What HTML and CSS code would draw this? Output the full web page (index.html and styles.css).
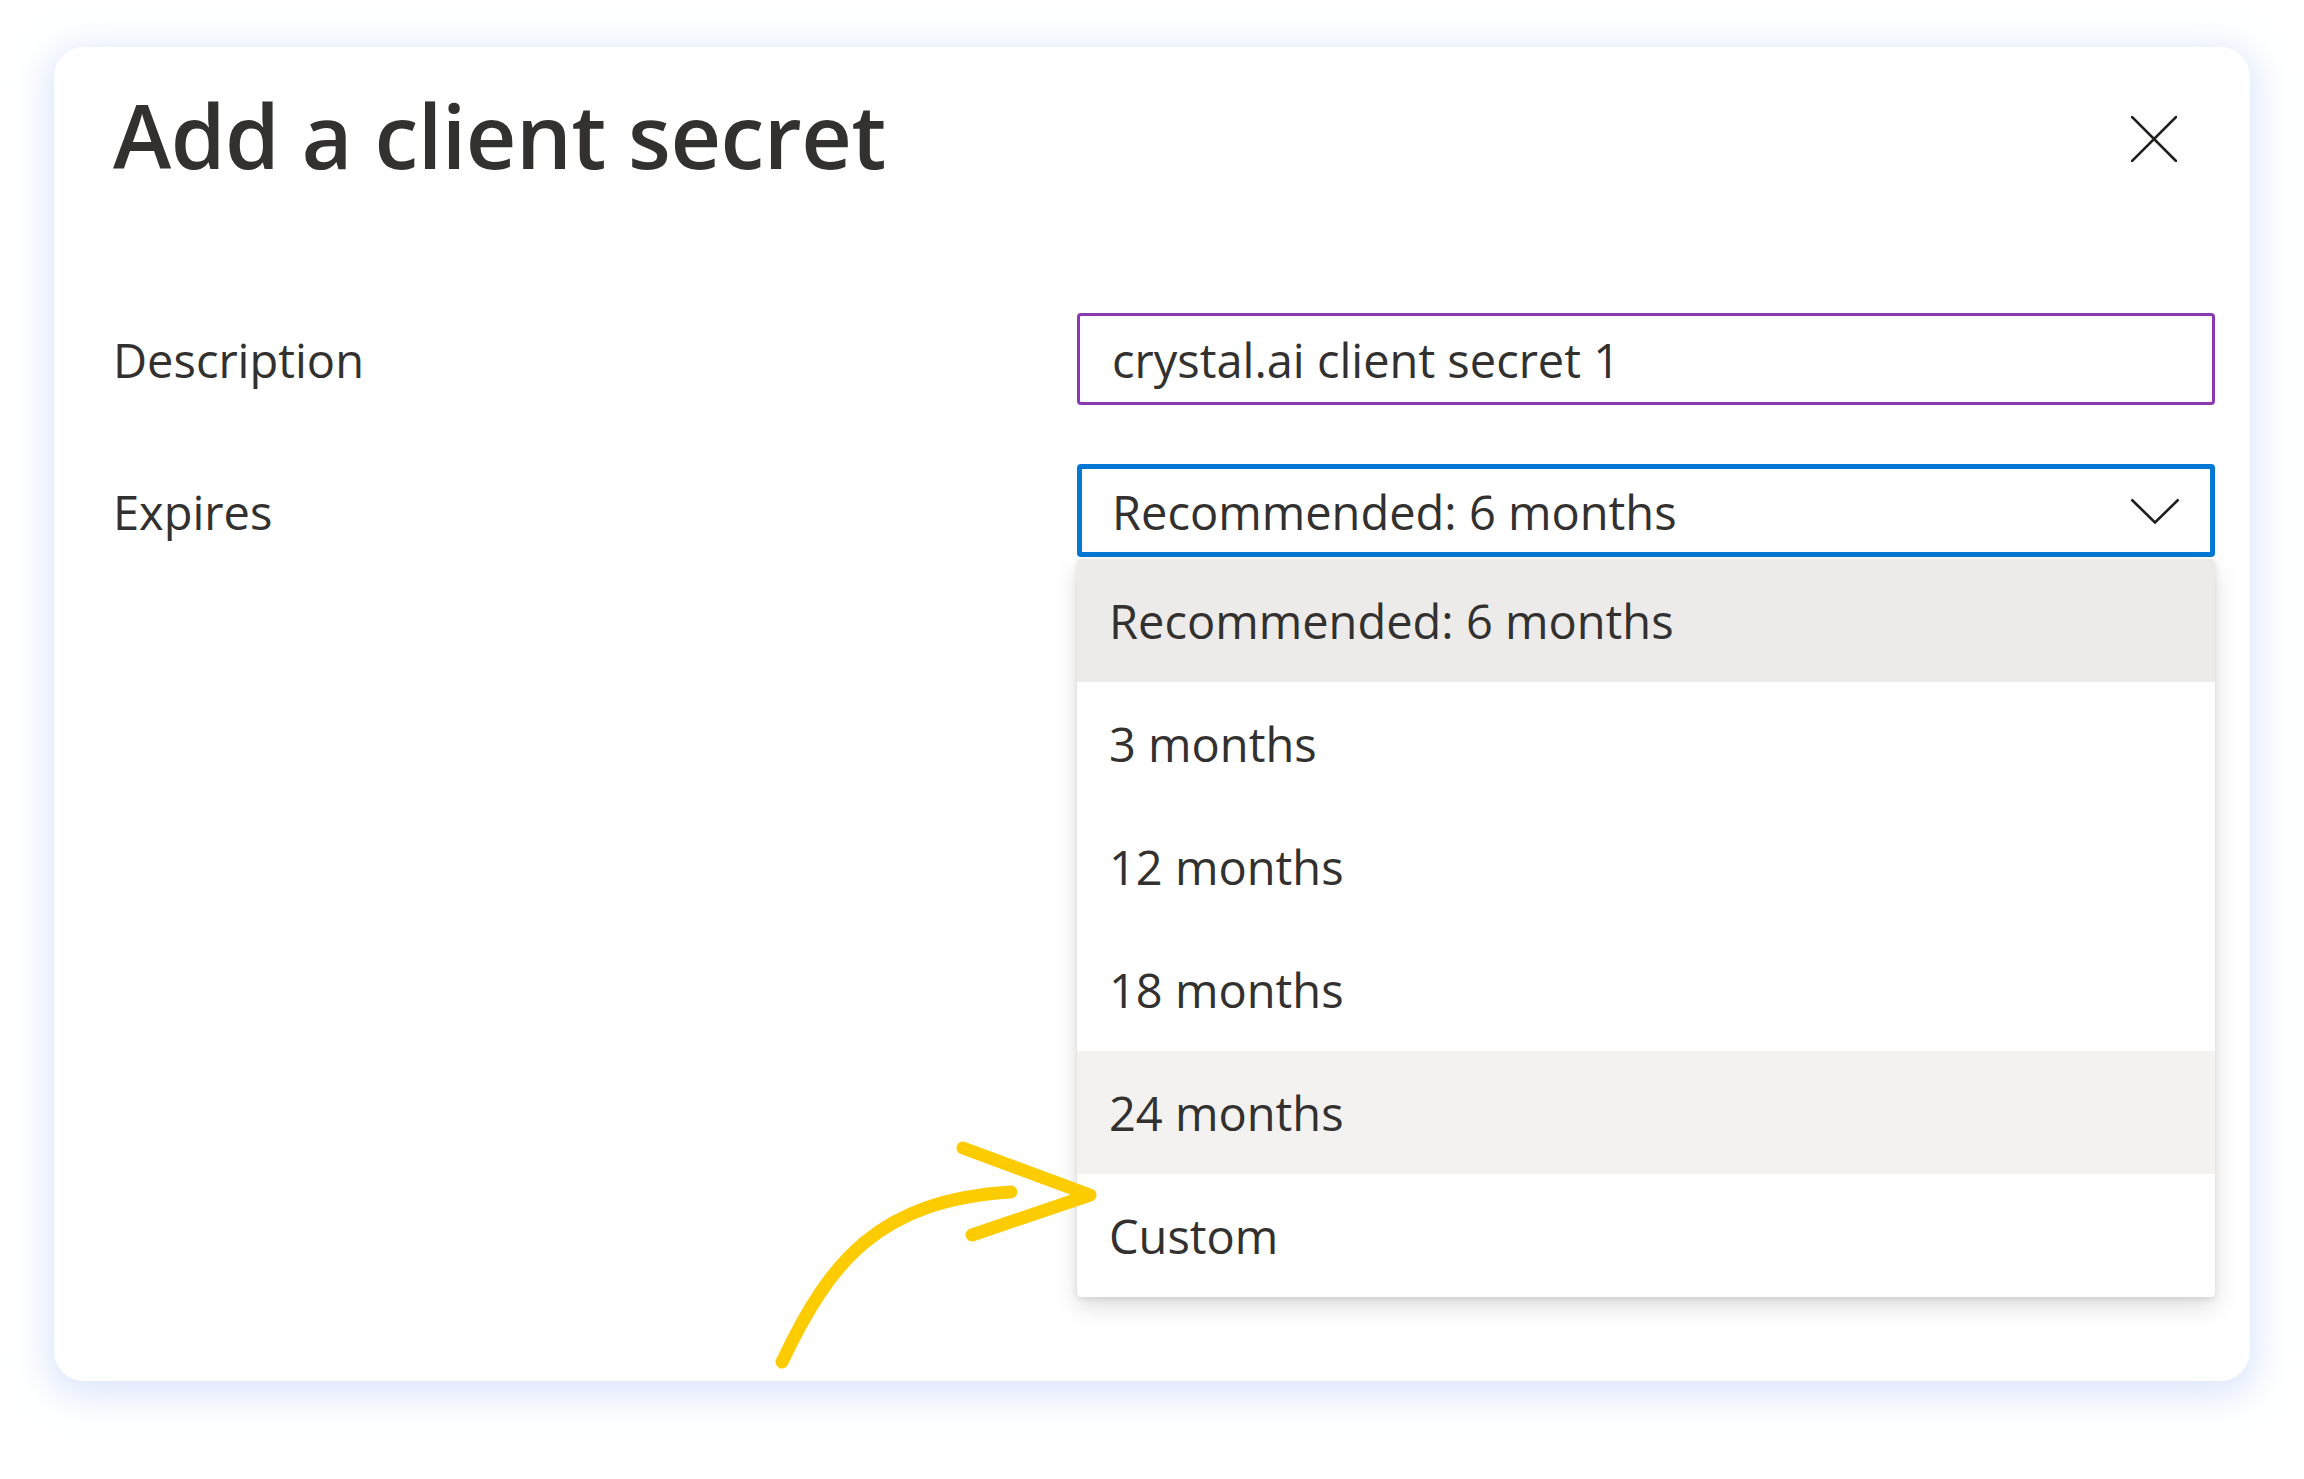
FILE: index.html
```html
<!DOCTYPE html>
<html lang="en">
<head>
<meta charset="utf-8">
<title>Add a client secret</title>
<link rel="stylesheet" href="styles.css">
</head>
<body>
<div class="page">
  <section class="dialog">
    <header class="dialog-header">
      <h1 class="title">Add a client secret</h1>
      <button class="close" aria-label="Close">
        <svg viewBox="0 0 46 46" width="46" height="46"><path d="M1 1 L45 45 M45 1 L1 45" fill="none" stroke="#201f1e" stroke-width="2.6" stroke-linecap="square"/></svg>
      </button>
    </header>
    <div class="form">
      <div class="row">
        <div class="label">Description</div>
        <div class="field">
          <div class="input">crystal.ai client secret 1</div>
        </div>
      </div>
      <div class="row row-top">
        <div class="label label-select">Expires</div>
        <div class="field">
          <div class="select">
            <span>Recommended: 6 months</span>
            <svg class="chevron" viewBox="0 0 50 26" width="50" height="26"><path d="M1.5 1.5 L25 24.5 L48.5 1.5" fill="none" stroke="#201f1e" stroke-width="2.6"/></svg>
          </div>
          <ul class="dropdown">
            <li class="option selected">Recommended: 6 months</li>
            <li class="option">3 months</li>
            <li class="option">12 months</li>
            <li class="option">18 months</li>
            <li class="option hover">24 months</li>
            <li class="option">Custom</li>
          </ul>
        </div>
      </div>
    </div>
    <svg class="annotation" viewBox="0 0 350 250" width="350" height="250">
      <path d="M18 230 C66 128 116 68 247 60" fill="none" stroke="#fdcc00" stroke-width="13" stroke-linecap="round"/>
      <path d="M199 16 L326 63 L208 103" fill="none" stroke="#fdcc00" stroke-width="13" stroke-linecap="round" stroke-linejoin="round"/>
    </svg>
  </section>
</div>
</body>
</html>
```
FILE: styles.css
```css
html, body {
  margin: 0;
  padding: 0;
  background: #ffffff;
}

body {
  font-family: "Open Sans", "Noto Sans", sans-serif;
  color: #323130;
}

.page {
  padding: 47px 0 0 54px;
  width: 2304px;
  height: 1479px;
  box-sizing: border-box;
}

.dialog {
  position: relative;
  width: 2196px;
  height: 1334px;
  box-sizing: border-box;
  background: #ffffff;
  border-radius: 30px;
  box-shadow: 0 8px 34px 8px rgba(200, 215, 250, 0.6);
  padding: 34px 35px 0 59px;
}

.dialog-header {
  display: flex;
  justify-content: space-between;
  align-items: flex-start;
  padding-right: 38px;
}

.title {
  margin: 0;
  font-size: 88px;
  font-weight: 600;
  line-height: 108px;
  color: #323130;
  letter-spacing: -0.5px;
}

.close {
  margin-top: 35px;
  padding: 0;
  border: 0;
  background: transparent;
  width: 46px;
  height: 46px;
  display: block;
}

.close svg {
  display: block;
}

.form {
  margin-top: 124px;
  display: flex;
  flex-direction: column;
  gap: 59px;
}

.row {
  display: grid;
  grid-template-columns: 964px 1138px;
  align-items: center;
}

.row-top {
  align-items: start;
}

.label {
  font-size: 47px;
  line-height: 64px;
  padding-top: 2px;
}

.label-select {
  margin-top: 14px;
}

.input {
  height: 92px;
  box-sizing: border-box;
  border: 3px solid #8a3aae;
  border-radius: 4px;
  padding: 2px 32px 0;
  font-size: 47px;
  line-height: 84px;
  white-space: nowrap;
}

.select {
  height: 93px;
  box-sizing: border-box;
  border: 5px solid #0078d4;
  border-radius: 4px;
  padding: 3px 30px 0;
  font-size: 47px;
  line-height: 80px;
  display: flex;
  justify-content: space-between;
  align-items: center;
}

.chevron {
  display: block;
  margin-top: -2px;
}

.dropdown {
  list-style: none;
  margin: 2px 0 0;
  padding: 0;
  background: #ffffff;
  border-radius: 4px;
  overflow: hidden;
  box-shadow: 0 10px 24px rgba(0, 0, 0, 0.13), 0 2px 6px rgba(0, 0, 0, 0.1);
}

.option {
  height: 123px;
  box-sizing: border-box;
  padding: 2px 32px 0;
  font-size: 47px;
  line-height: 121px;
  color: #323130;
}

.option.selected {
  background: #edebe9;
}

.option.hover {
  background: #f3f2f1;
}

.annotation {
  position: absolute;
  left: 710px;
  top: 1085px;
  overflow: visible;
}
```
